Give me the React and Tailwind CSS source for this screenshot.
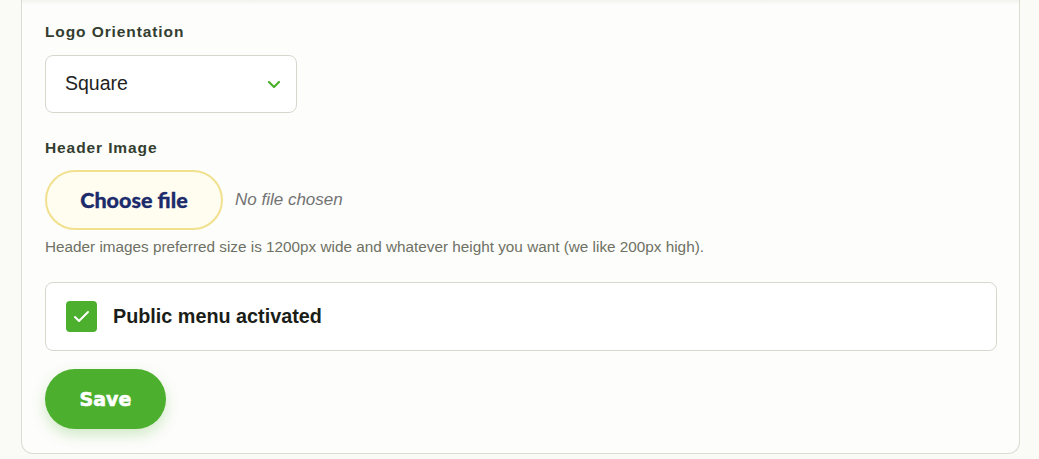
import React from "react";

export default function App() {
  return (
    <div className="min-h-[459px] bg-[#fafaf7] pl-[21px] pr-[19px] pb-[5px] font-['Liberation_Sans',Arial,sans-serif]">
      <div className="relative rounded-b-[12px] border border-t-0 border-[#dcdbd2] bg-[#fdfdfb] pl-[23px] pr-[22px] pt-[22px] pb-[24px]">
        <div className="pointer-events-none absolute left-0 right-0 top-0 h-[5px] bg-gradient-to-b from-[#f2f2ee] to-transparent" />
        <div className="text-[15.5px] font-bold leading-[20px] tracking-[0.9px] text-[#333d30]">Logo Orientation</div>
        <div className="mt-[13px] flex h-[58px] w-[252px] items-center justify-between rounded-[8px] border border-[#d8d7cc] bg-white pl-[19px] pr-[15px]">
          <span className="text-[19.5px] text-[#1f1f1f]">Square</span>
          <svg width="14" height="9" viewBox="0 0 14 9" fill="none">
            <path d="M2 2l5 5 5-5" stroke="#4caf2e" strokeWidth="2.2" strokeLinecap="round" strokeLinejoin="round" />
          </svg>
        </div>

        <div className="mt-[25px] text-[15.5px] font-bold leading-[20px] tracking-[0.9px] text-[#333d30]">Header Image</div>
        <div className="mt-[12px] flex items-center gap-[12px]">
          <div className="flex h-[60px] w-[178px] items-center justify-center rounded-full border-2 border-[#f1e08e] bg-[#fffdf0] font-['Lato',sans-serif] text-[21.5px] font-black text-[#1c2b6b] [-webkit-text-stroke:0.3px_#1c2b6b]">
            Choose file
          </div>
          <span className="text-[17px] italic text-[#737373]">No file chosen</span>
        </div>
        <div className="mt-[7px] text-[15.3px] leading-[20px] text-[#6e7164]">
          Header images preferred size is 1200px wide and whatever height you want (we like 200px high).
        </div>

        <div className="mt-[25px] flex h-[69px] items-center gap-[16px] rounded-[8px] border border-[#d8d7cc] bg-white pl-[20px]">
          <div className="flex h-[31px] w-[31px] items-center justify-center rounded-[4px] bg-[#4caf2e]">
            <svg width="17" height="13" viewBox="0 0 17 13" fill="none">
              <path d="M2 7l4 4L15 2" stroke="white" strokeWidth="2" strokeLinecap="round" strokeLinejoin="round" />
            </svg>
          </div>
          <span className="text-[19.8px] font-bold text-[#1a1d18]">Public menu activated</span>
        </div>

        <button className="mt-[18px] flex h-[60px] w-[121px] items-center justify-center rounded-full bg-[#4caf2e] font-['DejaVu_Sans',sans-serif] text-[19px] font-bold text-white shadow-[0_6px_14px_rgba(76,175,46,0.25)] [-webkit-text-stroke:0.6px_white]">
          Save
        </button>
      </div>
    </div>
  );
}
